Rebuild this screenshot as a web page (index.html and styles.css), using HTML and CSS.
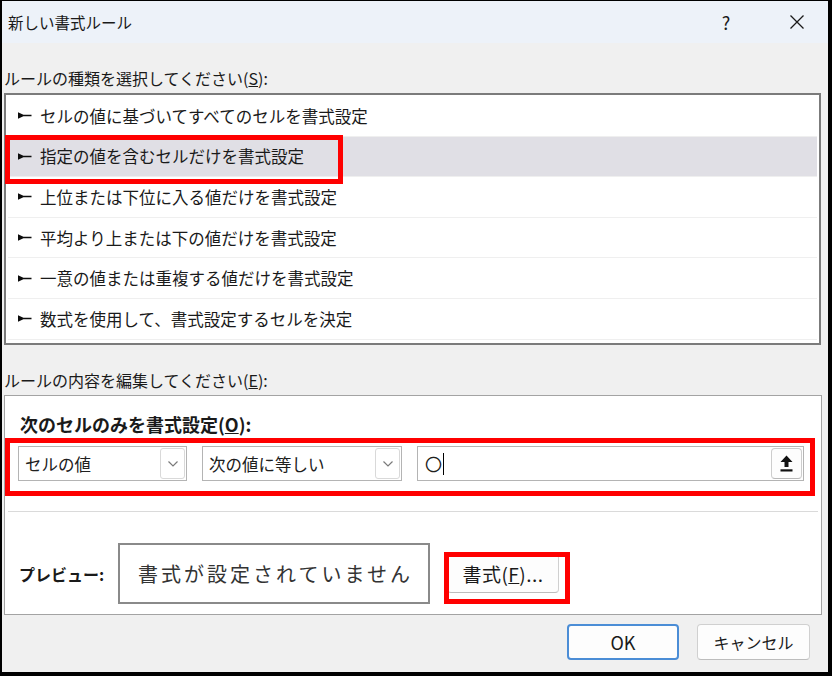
FILE: index.html
```html
<!DOCTYPE html>
<html lang="ja">
<head>
<meta charset="utf-8">
<title>新しい書式ルール</title>
<link rel="stylesheet" href="styles.css">
</head>
<body>
<div class="dialog">
  <div class="titlebar">
    <span class="title">新しい書式ルール</span>
    <span class="help">?</span>
    <svg class="close" width="14" height="14" viewBox="0 0 14 14"><path d="M0.5 0.5 L13.5 13.5 M13.5 0.5 L0.5 13.5" stroke="#1a1a1a" stroke-width="1.3" fill="none"/></svg>
  </div>
  <div class="label">ルールの種類を選択してください(<u>S</u>):</div>
  <div class="listbox">
    <div class="row"><svg class="bullet" width="14" height="7" viewBox="0 0 14 7"><path d="M0 0.2 L7 3.5 L0 6.8 Z M5 2.7 H13.5 V4.3 H5 Z" fill="#0d0d0d"/></svg><span>セルの値に基づいてすべてのセルを書式設定</span></div>
    <div class="row sel"><svg class="bullet" width="14" height="7" viewBox="0 0 14 7"><path d="M0 0.2 L7 3.5 L0 6.8 Z M5 2.7 H13.5 V4.3 H5 Z" fill="#0d0d0d"/></svg><span>指定の値を含むセルだけを書式設定</span></div>
    <div class="row"><svg class="bullet" width="14" height="7" viewBox="0 0 14 7"><path d="M0 0.2 L7 3.5 L0 6.8 Z M5 2.7 H13.5 V4.3 H5 Z" fill="#0d0d0d"/></svg><span>上位または下位に入る値だけを書式設定</span></div>
    <div class="row"><svg class="bullet" width="14" height="7" viewBox="0 0 14 7"><path d="M0 0.2 L7 3.5 L0 6.8 Z M5 2.7 H13.5 V4.3 H5 Z" fill="#0d0d0d"/></svg><span>平均より上または下の値だけを書式設定</span></div>
    <div class="row"><svg class="bullet" width="14" height="7" viewBox="0 0 14 7"><path d="M0 0.2 L7 3.5 L0 6.8 Z M5 2.7 H13.5 V4.3 H5 Z" fill="#0d0d0d"/></svg><span>一意の値または重複する値だけを書式設定</span></div>
    <div class="row"><svg class="bullet" width="14" height="7" viewBox="0 0 14 7"><path d="M0 0.2 L7 3.5 L0 6.8 Z M5 2.7 H13.5 V4.3 H5 Z" fill="#0d0d0d"/></svg><span>数式を使用して、書式設定するセルを決定</span></div>
  </div>
  <div class="label">ルールの内容を編集してください(<u>E</u>):</div>
  <div class="panel">
    <div class="panel-title">次のセルのみを書式設定(<u>O</u>):</div>
    <div class="criteria">
      <div class="combo c1"><span>セルの値</span><span class="drop"><svg width="10" height="6" viewBox="0 0 10 6"><path d="M0.5 0.5 L5 5 L9.5 0.5" stroke="#7a7a7a" stroke-width="1.2" fill="none"/></svg></span></div>
      <div class="combo c2"><span>次の値に等しい</span><span class="drop"><svg width="10" height="6" viewBox="0 0 10 6"><path d="M0.5 0.5 L5 5 L9.5 0.5" stroke="#7a7a7a" stroke-width="1.2" fill="none"/></svg></span></div>
      <div class="combo field"><span class="val">〇</span><span class="caret"></span><span class="ref-btn"><svg width="13" height="17" viewBox="0 0 13 17"><path d="M6.5 0.5 L12.5 7 L8.5 7 L8.5 12 L4.5 12 L4.5 7 L0.5 7 Z" fill="#111"/><rect x="0.5" y="14.3" width="12" height="2.2" fill="#111"/></svg></span></div>
    </div>
    <div class="sep"></div>
    <div class="preview-row">
      <span class="preview-label">プレビュー:</span>
      <div class="preview-box">書式が設定されていません</div>
      <button class="btn fmt-btn">書式(<u>F</u>)...</button>
    </div>
  </div>
  <div class="footer">
    <button class="btn ok">OK</button>
    <button class="btn cancel">キャンセル</button>
  </div>
</div>
<div class="mark m1"></div>
<div class="mark m2"></div>
<div class="mark m3"></div>
</body>
</html>
```
FILE: styles.css
```css
html, body {
  margin: 0;
  background: #000;
}
body {
  font-family: "Noto Sans CJK JP", "Noto Sans", sans-serif;
  color: #1c1c1c;
}
.dialog {
  margin: 1px 4px 0 2px;
  width: 826px;
  height: 671px;
  background: #f0f0f0;
  display: flex;
  flex-direction: column;
}
.titlebar {
  height: 42px;
  flex: 0 0 42px;
  background: #edf2f9;
  display: flex;
  align-items: center;
  padding: 0 24px 0 6px;
}
.title {
  flex: 1;
  font-size: 15.5px;
  color: #1a1a1a;
}
.help {
  width: 20px;
  text-align: center;
  font-size: 18px;
  margin-right: 54px;
  color: #1a1a1a;
}
.close {
  display: block;
}
.label {
  font-size: 16px;
  line-height: 24px;
  padding: 23px 0 3px 2px;
  color: #1a1a1a;
}
.listbox {
  margin: 0 7px 0 2px;
  height: 252px;
  flex: 0 0 252px;
  box-sizing: border-box;
  border: 2px solid #7b7b7b;
  background: #fff;
  padding: 1px 2px 0 2px;
}
.row {
  height: 40.6px;
  box-sizing: border-box;
  border-bottom: 1px solid #efefef;
  display: flex;
  align-items: center;
  padding-left: 10px;
  font-size: 16.5px;
  color: #1a1a1a;
}
.row.sel {
  background: #e0dfe5;
}
.bullet {
  display: block;
  margin-right: 8px;
  flex: 0 0 14px;
}
.panel {
  margin: 0 6px 0 2px;
  height: 220px;
  flex: 0 0 220px;
  box-sizing: border-box;
  border: 1px solid #a3a3a3;
  background: #fff;
  padding-top: 16px;
}
.panel-title {
  font-size: 18px;
  font-weight: bold;
  line-height: 24px;
  padding-left: 15px;
  color: #1a1a1a;
}
.criteria {
  display: flex;
  gap: 15px;
  margin: 10px 0 0 13px;
  height: 35px;
}
.combo {
  box-sizing: border-box;
  height: 35px;
  border: 1px solid #b4b4b4;
  background: #fff;
  display: flex;
  align-items: center;
  justify-content: space-between;
  padding: 1px 1px 1px 6px;
  font-size: 16.5px;
  color: #202020;
}
.c1 { width: 169px; }
.c2 { width: 200px; }
.field {
  width: 387px;
  padding-left: 7px;
  justify-content: flex-start;
}
.drop {
  width: 25px;
  height: 31px;
  box-sizing: border-box;
  border: 1px solid #d9d9d9;
  border-radius: 3px;
  display: flex;
  align-items: center;
  justify-content: center;
}
.val {
  font-size: 17px;
}
.caret {
  width: 1px;
  height: 22px;
  background: #000;
  margin-left: 1px;
}
.ref-btn {
  margin-left: auto;
  width: 31px;
  height: 31px;
  box-sizing: border-box;
  border: 1px solid #cdcdcd;
  border-bottom-color: #b8b8b8;
  border-radius: 4px;
  background: #fdfdfd;
  display: flex;
  align-items: center;
  justify-content: center;
}
.sep {
  height: 1px;
  background: #dadada;
  margin: 30px 3px 0 3px;
}
.preview-row {
  display: flex;
  align-items: center;
  margin: 31px 0 0 14px;
}
.preview-label {
  width: 99px;
  flex: 0 0 99px;
  font-size: 16px;
  font-weight: bold;
  color: #1a1a1a;
}
.preview-box {
  width: 312px;
  height: 61px;
  box-sizing: border-box;
  border: 2px solid #8a8a8a;
  display: flex;
  align-items: center;
  justify-content: center;
  font-size: 20px;
  letter-spacing: 3px;
  padding-left: 3px;
  color: #333;
}
.btn {
  font-family: "Noto Sans CJK JP", "Noto Sans", sans-serif;
  background: #fdfdfd;
  border: 1px solid #d0d0d0;
  border-bottom-color: #bdbdbd;
  border-radius: 4px;
  color: #1a1a1a;
  padding: 0;
  box-sizing: border-box;
}
.fmt-btn {
  margin-left: 17px;
  width: 112px;
  height: 39px;
  font-size: 19px;
  letter-spacing: 0.5px;
}
.footer {
  display: flex;
  justify-content: flex-end;
  gap: 18px;
  padding: 9px 18px 0 0;
}
.ok {
  width: 112px;
  height: 36px;
  font-size: 18px;
  border: 2px solid #4b8dd6;
}
.cancel {
  width: 113px;
  height: 36px;
  font-size: 16px;
}
.mark {
  position: absolute;
  box-sizing: border-box;
  border: 5px solid #ff0000;
}
.m1 { left: 5px; top: 135px; width: 338px; height: 49px; }
.m2 { left: 5px; top: 438px; width: 810px; height: 58px; }
.m3 { left: 444px; top: 552px; width: 126px; height: 52px; }
```
